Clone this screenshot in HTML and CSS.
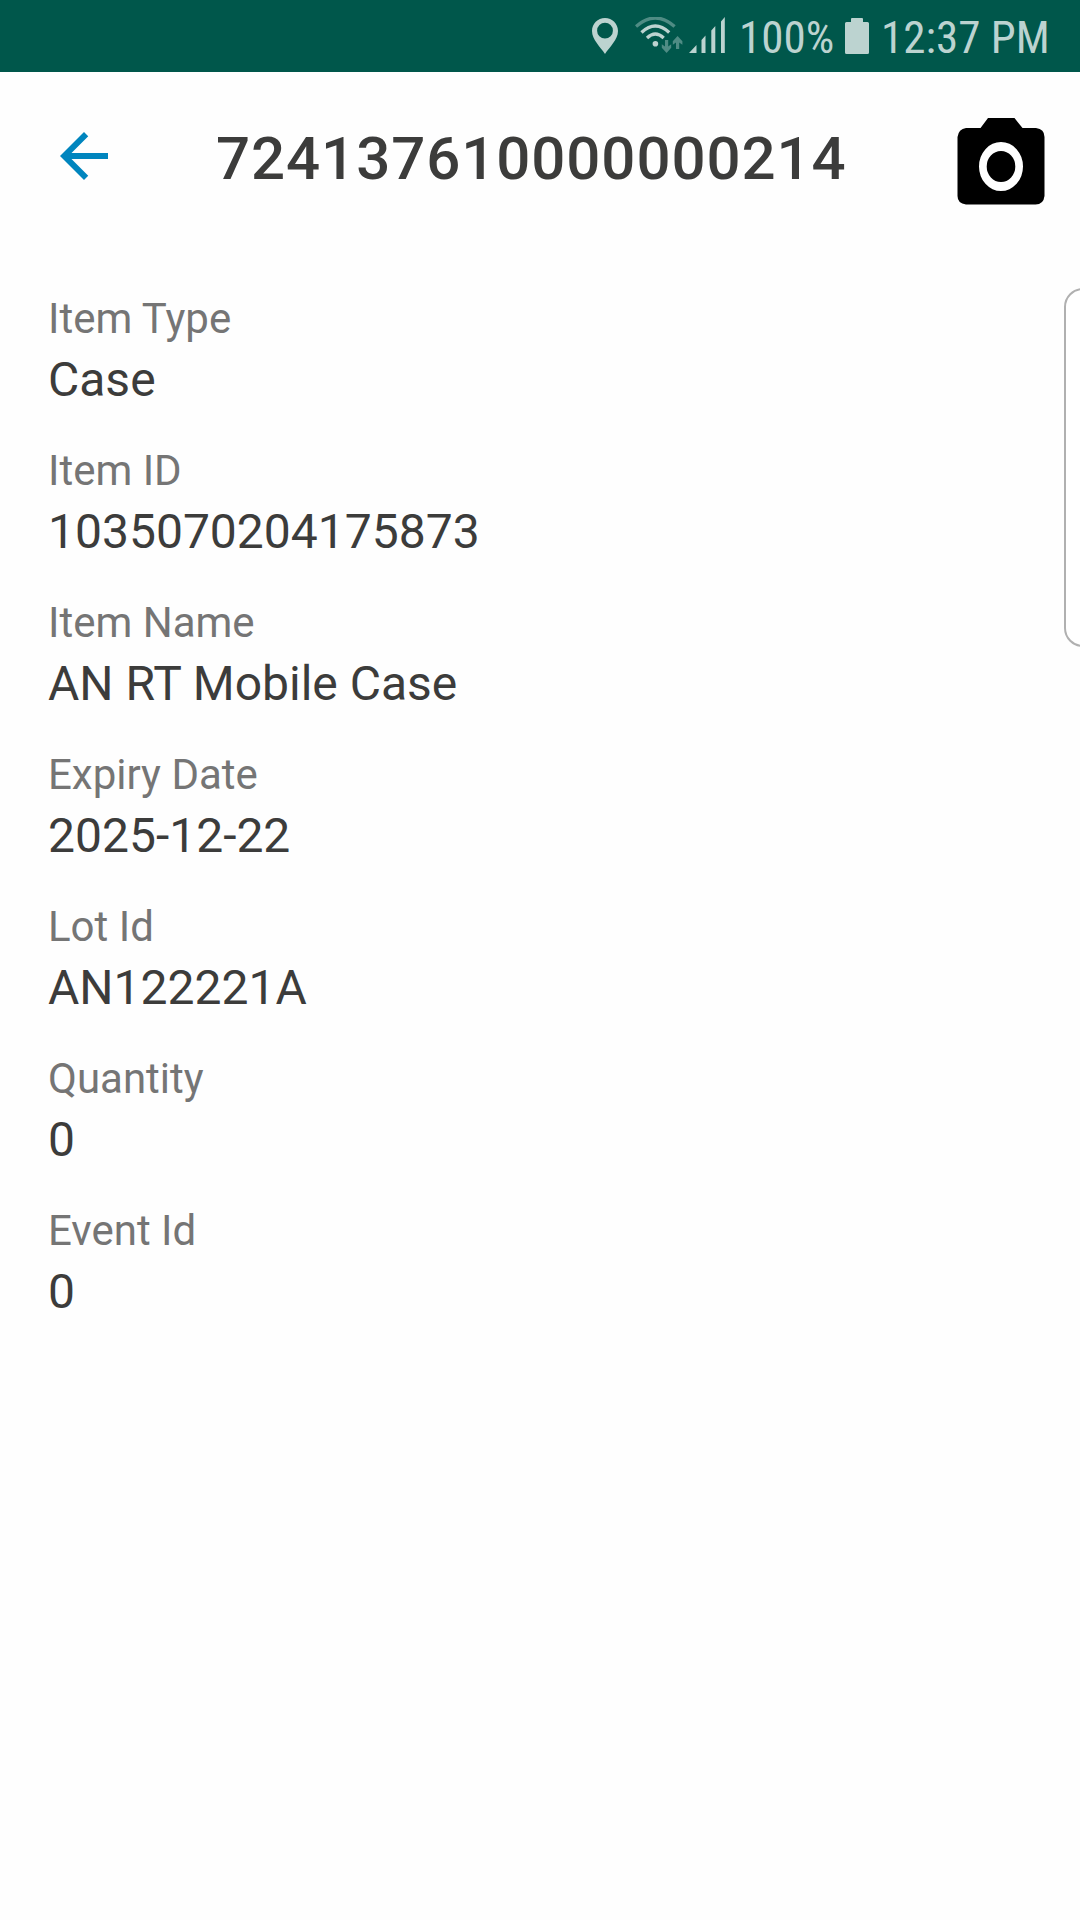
FILE: index.html
```html
<!DOCTYPE html>
<html lang="en">
<head>
<meta charset="utf-8">
<title>Item details</title>
<link rel="stylesheet" href="styles.css">
</head>
<body>
<div class="screen">
  <header class="status-bar">
    <svg class="icon-pin" viewBox="0 0 26 36"><path fill-rule="evenodd" d="M13 0C5.7 0 0 5.7 0 13c0 8.500 8.500 16 13 23 4.500-7 13-14.500 13-23C26 5.700 20.300 0 13 0zm0 4.800a7.900 7.900 0 1 1 0 15.800 7.900 7.900 0 0 1 0-15.800z"/></svg>
    <svg class="icon-wifi" viewBox="0 0 48 38">
      <g class="wifi-arcs"><path class="dim" d="M1 9.500Q20.300-7.500 39.600 9.500"/><path d="M6.500 15.500Q20.300 2.500 34.200 15.500"/><path d="M12 21Q20.300 13 28.700 21"/></g>
      <circle cx="20.400" cy="26.700" r="2.800"/>
      <path class="dim-fill" d="M30 23h3.200v6.600l3-2.300v3.500L31.600 36l-4.800-5.200v-3.500l3.200 2.300zM41 32h3.200v-6.600l3.200 2.300v-3.500L42.600 19l-4.800 5.200v3.500l3.200-2.300z"/>
    </svg>
    <svg class="icon-signal" viewBox="0 0 36 36"><path d="M0 36h7.500v-8zM12.500 36h4V18.500l-4 4.500zM22.300 36h4V9l-4 4.500zM32 36h3.800V0L32 4.500z"/></svg>
    <span class="battery-level">100%</span>
    <svg class="icon-battery" viewBox="0 0 24 36"><path d="M6 1q0-1 1-1h10q1 0 1 1v3h4.500q1.500 0 1.500 1.500v29q0 1.500-1.500 1.500h-21Q0 36 0 34.500v-29Q0 4 1.500 4H6z"/></svg>
    <span class="clock">12:37 PM</span>
  </header>

  <nav class="toolbar">
    <svg class="icon-back" viewBox="0 0 24 24"><path d="M20 11H7.830l5.590-5.590L12 4l-8 8 8 8 1.410-1.410L7.830 13H20v-2z"/></svg>
    <h1 class="title">724137610000000214</h1>
    <svg class="icon-camera" viewBox="0 0 88 88"><path fill-rule="evenodd" d="M31 0h26.500l8 10H79q8.500 1 8.500 9v59q-1 8.500-9 8.500H9Q.500 85.500.500 78V19Q1.500 11 9 10h14.500zM44 24a22 24.500 0 1 0 0 49 22 24.500 0 1 0 0-49zm0 9a14.300 15.500 0 1 1 0 31 14.300 15.500 0 1 1 0-31z"/></svg>
  </nav>

  <dl class="details">
    <div class="field"><dt>Item Type</dt><dd>Case</dd></div>
    <div class="field"><dt>Item ID</dt><dd>1035070204175873</dd></div>
    <div class="field"><dt>Item Name</dt><dd>AN RT Mobile Case</dd></div>
    <div class="field"><dt>Expiry Date</dt><dd>2025-12-22</dd></div>
    <div class="field"><dt>Lot Id</dt><dd>AN122221A</dd></div>
    <div class="field"><dt>Quantity</dt><dd>0</dd></div>
    <div class="field"><dt>Event Id</dt><dd>0</dd></div>
  </dl>

  <div class="edge-handle"></div>
</div>
</body>
</html>
```
FILE: styles.css
```css
* { box-sizing: border-box; }

body {
  margin: 0;
  background: #fefefe;
  font-family: Roboto, "Liberation Sans", sans-serif;
  color: #3c3c3b;
}

svg { display: block; flex: none; }

.screen {
  position: relative;
  width: 1080px;
  height: 1920px;
  overflow: hidden;
}

.status-bar {
  display: flex;
  height: 72px;
  padding-left: 592px;
  background: #00574b;
  color: #bcd3d0;
  fill: #bcd3d0;
  font-family: "Roboto Condensed", Roboto, sans-serif;
  font-stretch: condensed;
  font-size: 45px;
  line-height: 53px;
  white-space: nowrap;
}

.icon-pin { width: 26px; height: 36px; margin-top: 18px; }
.icon-wifi { width: 48px; height: 38px; margin: 17px 0 0 17px; }
.wifi-arcs { fill: none; stroke: #bcd3d0; stroke-width: 3.3; }
.wifi-arcs .dim { stroke: #4f8c84; }
.dim-fill { fill: #4f8c84; }
.icon-signal { width: 36px; height: 36px; margin: 17px 0 0 6px; }
.icon-battery { width: 24px; height: 36px; margin-top: 18px; }

.battery-level {
  width: 120px;
  padding: 11px 0 0 14px;
}

.clock { padding: 11px 0 0 12px; }

.toolbar {
  display: flex;
  height: 168px;
  padding-left: 48px;
}

.icon-back { width: 72px; height: 72px; margin-top: 48px; fill: #0085be; }

.title {
  width: 740px;
  margin: 0;
  padding: 52px 0 0 96px;
  font-size: 60px;
  line-height: 70px;
  font-weight: 500;
  letter-spacing: 0.93px;
}

.icon-camera { width: 88px; height: 88px; margin: 45.500px 0 0 96.500px; fill: #000; }

.details { margin: 0; padding: 50px 48px 0; }
.field { height: 152px; }

dt {
  padding-top: 4px;
  font-size: 42px;
  line-height: 49px;
  color: #757575;
}

dd {
  margin: 9px 0 0;
  font-size: 48px;
  line-height: 56px;
}

/* Edge panel handle, sliding in over the right side of the screen */
.edge-handle {
  position: absolute;
  top: 288px;
  left: 1064px;
  width: 40px;
  height: 359px;
  border: 2px solid #b0b0b0;
  border-radius: 19px;
  background: #fff;
}
```
